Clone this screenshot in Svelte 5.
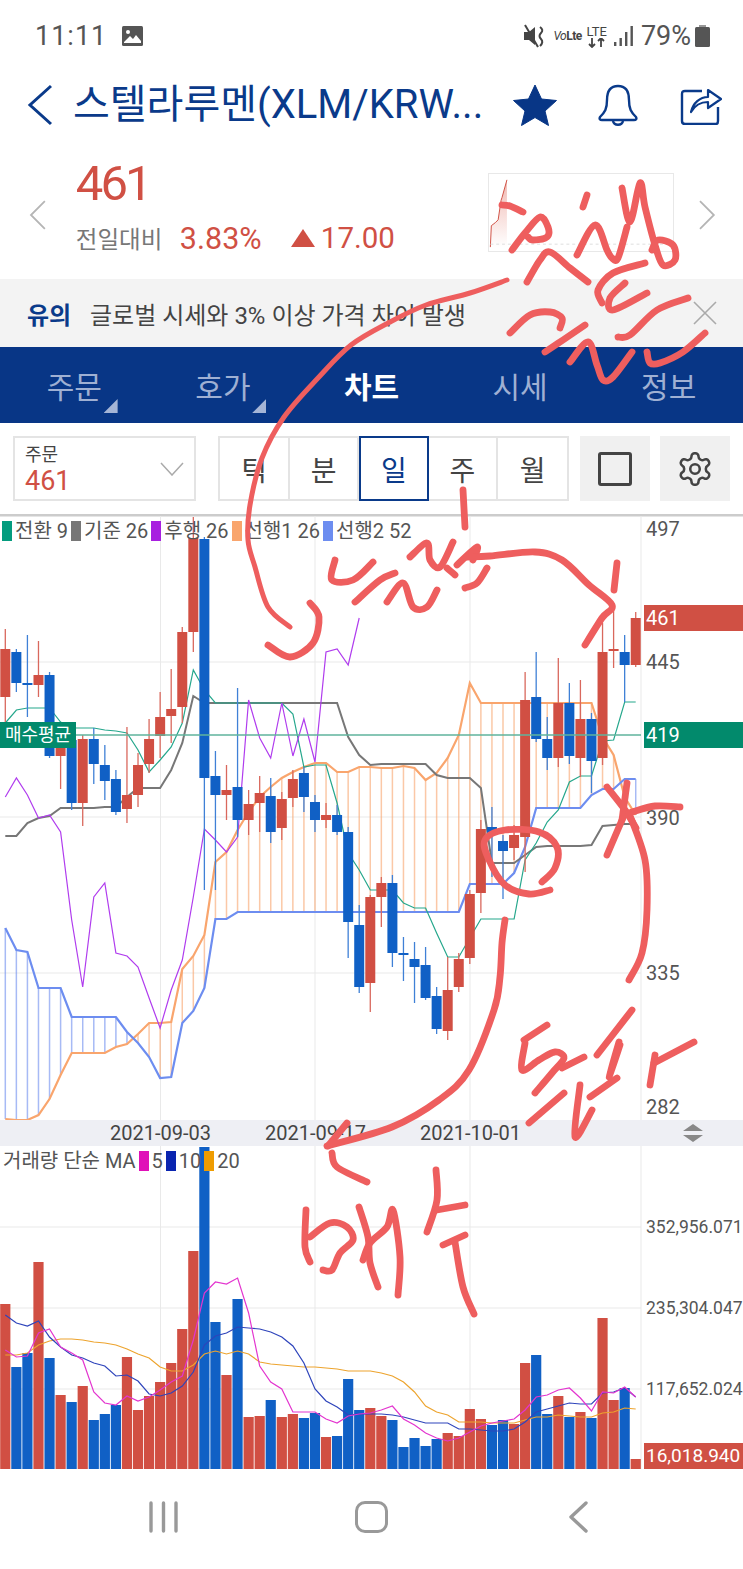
<script lang="ts">
  // candle x positions share one grid across both panes
  const STEP = 11.06;
  const xAt = (i: number) => 5.3 + STEP * i;

  // [up?, high, bodyTop, bodyBottom, low] in page y
  const candles: [number, number, number, number, number][] = [
    [1,629,649,697,723],[0,649,652,683,692],[0,635,683,685,717],[1,641,675,685,697],[0,672,675,756,758],
    [1,735,740,756,789],[0,738,740,803,810],[1,735,739,803,826],[0,728,739,764,784],[0,745,765,781,800],
    [0,770,779,812,815],[1,727,795,809,823],[1,753,765,795,807],[1,719,739,764,773],[1,692,717,736,758],
    [1,669,709,716,743],[1,627,632,707,723],[1,517,538,632,652],[0,537,539,778,890],[0,751,776,795,890],
    [1,765,790,795,820],[0,688,787,820,837],[1,790,804,820,835],[1,776,793,803,832],[0,778,796,832,843],
    [1,792,799,828,840],[1,770,779,798,807],[0,767,773,797,812],[0,795,802,820,832],[1,803,815,820,828],
    [0,805,815,832,835],[0,827,832,922,958],[0,905,925,987,993],[1,895,897,983,1012],[1,877,883,897,927],
    [0,875,883,953,967],[0,937,953,955,981],[0,942,959,967,1003],[0,947,965,998,1000],[0,987,996,1029,1034],
    [1,957,990,1031,1040],[1,953,959,987,992],[1,890,894,958,964],[1,820,829,893,913],[0,807,827,835,877],
    [0,835,841,851,899],[1,825,835,848,860],[1,672,700,837,872],[0,652,697,739,742],[0,717,739,758,770],
    [1,658,703,758,767],[0,683,703,756,764],[1,680,719,758,777],[0,713,719,761,793],[1,623,652,758,765],
    [1,603,649,651,668],[0,635,652,665,702],[1,612,618,665,667]
  ];

  const tenkan = [723,710,708,708,708,722,728,728,728,730,731,733,750,772,760,747,723,670,690,703,703,703,703,703,703,703,714,767,765,765,803,853,870,890,890,890,903,908,908,933,957,957,938,919,919,919,919,860,843,822,810,782,776,776,741,740,702,702];
  const kijun = [836,836,823,818,816,808,808,808,808,807,807,797,788,788,788,770,743,696,703,703,703,703,703,703,703,703,703,703,703,703,703,737,755,765,764,764,764,764,764,775,778,778,778,788,863,863,863,855,847,846,846,846,846,845,826,825,824,824];
  const chikou = [797,778,795,818,815,832,920,987,897,883,953,956,967,998,1028,990,960,897,829,840,852,837,700,738,758,703,756,719,762,652,649,665,618];
  const span1 = [1119,1120,1120,1115,1099,1075,1053,1053,1053,1053,1047,1044,1034,1023,1023,1022,969,956,935,862,852,830,812,797,787,778,772,767,763,763,772,772,767,767,768,768,766,768,780,773,758,735,683,703,703,703,703,703,703,703,703,703,703,703,737,755,797,815];
  const span2 = [928,950,952,988,988,988,1017,1017,1017,1017,1017,1032,1043,1057,1078,1077,1023,1011,988,919,919,912,912,912,912,912,912,912,912,912,912,912,912,912,912,912,912,912,912,912,912,912,884,884,884,884,873,847,808,808,808,808,808,795,789,789,779,779];

  const volumeTops = [1304,1367,1353,1262,1358,1395,1402,1386,1420,1414,1405,1357,1410,1396,1382,1363,1329,1251,1147,1322,1375,1299,1417,1416,1400,1417,1414,1418,1413,1437,1436,1379,1410,1408,1416,1420,1447,1438,1446,1439,1433,1436,1409,1419,1425,1420,1424,1363,1355,1414,1396,1417,1412,1418,1318,1400,1388,1459];
  const ma5 = [1350,1357,1356,1333,1329,1347,1353,1360,1392,1403,1405,1396,1401,1397,1390,1382,1376,1340,1293,1282,1284,1278,1313,1366,1382,1389,1412,1412,1412,1419,1423,1416,1414,1413,1410,1406,1419,1425,1433,1438,1441,1438,1432,1426,1423,1421,1419,1410,1397,1395,1390,1388,1398,1411,1392,1393,1387,1397];
  const ma10 = [1315,1323,1326,1321,1337,1347,1355,1358,1363,1366,1376,1375,1381,1394,1396,1393,1386,1372,1345,1336,1333,1327,1328,1329,1332,1337,1346,1363,1389,1401,1407,1415,1414,1414,1414,1415,1417,1420,1423,1423,1423,1429,1429,1430,1431,1431,1429,1422,1412,1409,1406,1403,1404,1404,1393,1392,1388,1397];
  const ma20 = [1355,1355,1353,1345,1341,1339,1339,1340,1342,1343,1345,1349,1354,1358,1367,1371,1371,1365,1354,1351,1354,1351,1354,1362,1364,1365,1366,1367,1367,1368,1369,1371,1371,1371,1373,1376,1382,1392,1406,1412,1415,1422,1422,1422,1423,1423,1423,1420,1417,1417,1415,1416,1417,1417,1413,1412,1408,1409];

  const line = (ys: number[]) => ys.map((y, i) => `${xAt(i).toFixed(1)},${y}`).join(' ');

  const priceGrid = [662, 817, 973];
  const volumeGrid = [1227, 1308, 1389];
  const dateGrid = [160.5, 315, 470];

  const priceAxis = [['497', 529], ['445', 662], ['390', 818], ['335', 973], ['282', 1107]] as const;
  const volumeAxis = [['352,956.071', 1227], ['235,304.047', 1308], ['117,652.024', 1389]] as const;

  const legend = [
    ['전환 9', '#049c7e'], ['기준 26', '#777'], ['후행 26', '#a81fe0'], ['선행1 26', '#f9a56d'], ['선행2 52', '#6d8df0']
  ];
  const tabs = [
    { label: '주문', more: true }, { label: '호가', more: true }, { label: '차트', active: true }, { label: '시세' }, { label: '정보' }
  ];
  const periods = ['틱', '분', '일', '주', '월'];

  // pen marks scribbled on top of the screenshot, page coordinates
  const ink: number[][] = [
    [502,205,510,206,523,212],
    [512,250,525,233,540,217,548,227,547,237,533,240,528,237],
    [527,282,540,260,550,252,570,268,588,282],
    [587,195,583,207],
    [577,255,595,225,607,250,612,258,618,258,627,227],
    [622,188,630,222,640,183,645,207,655,245,663,265,675,260,673,245,658,240,652,250],
    [645,263,613,273,598,290,602,303],
    [625,283,610,298,613,310,647,293],
    [688,298,657,310,630,335,618,337],
    [510,333,530,315,550,312,562,318,560,328],
    [585,325,563,340,545,352],
    [570,362,588,342,597,365,603,380,613,377,632,352],
    [647,352,650,363,660,363,683,352,705,333],
    [507,280,470,293,426,305,390,322,351,345,318,378,284,417,262,458,250,505,248,540,255,567,268,607,290,627],
    [310,603,319,617,313,643,290,657,268,645],
    [463,490,465,527],
    [335,560,332,580,353,580,373,562],
    [355,602,380,580,395,573],
    [387,602,403,583,413,607,427,607,437,590],
    [410,557,427,543,430,560,440,567,453,542],
    [447,568,455,575],
    [457,565,477,547,473,560],
    [465,588,477,583,487,568],
    [467,557,490,556,535,552,562,560,589,585,612,605,602,618,585,645],
    [617,563,614,590],
    [607,787,625,810,636,828],
    [627,783,622,820],
    [632,812,655,806,680,807],
    [607,855,625,813],
    [629,813,645,860,647,910,642,953,629,980],
    [550,890,529,894,505,885,489,860,485,840,505,830,539,832,557,847,555,868,542,882],
    [505,920,502,943,500,977,494,1010,469,1070,439,1100,392,1127,327,1146],
    [347,1123,328,1146],
    [332,1153,337,1167,367,1182],
    [547,1025,524,1040],
    [525,1043,522,1070,539,1060,555,1052,564,1058,552,1073,535,1093],
    [584,1057,562,1068],
    [564,1093,529,1123],
    [580,1085,575,1137,592,1110],
    [632,1010,597,1055],
    [619,1042,609,1077,620,1045],
    [617,1078,590,1097],
    [694,1042,654,1063],
    [655,1055,650,1085],
    [306,1210,305,1247,310,1262],
    [310,1237,330,1223,347,1227,353,1240,340,1253,332,1270,323,1270],
    [359,1207,368,1237,370,1263,378,1287],
    [363,1260,370,1243,387,1227,393,1210,400,1257,398,1295],
    [436,1170,437,1200,427,1232],
    [437,1210,465,1205],
    [443,1245,465,1235],
    [455,1242,463,1287,474,1314]
  ];

  function smooth(p: number[]) {
    const pts: [number, number][] = [];
    for (let i = 0; i < p.length; i += 2) pts.push([p[i], p[i + 1]]);
    let d = `M${pts[0][0]} ${pts[0][1]}`;
    for (let i = 0; i < pts.length - 1; i++) {
      const a = pts[Math.max(i - 1, 0)];
      const b = pts[i];
      const c = pts[i + 1];
      const e = pts[Math.min(i + 2, pts.length - 1)];
      const c1x = b[0] + (c[0] - a[0]) / 6;
      const c1y = b[1] + (c[1] - a[1]) / 6;
      const c2x = c[0] - (e[0] - b[0]) / 6;
      const c2y = c[1] - (e[1] - b[1]) / 6;
      d += ` C${c1x.toFixed(1)} ${c1y.toFixed(1)} ${c2x.toFixed(1)} ${c2y.toFixed(1)} ${c[0]} ${c[1]}`;
    }
    return d;
  }

  const gearPath = 'M12.22 2h-.44a2 2 0 0 0-2 2v.18a2 2 0 0 1-1 1.73l-.43.25a2 2 0 0 1-2 0l-.15-.08a2 2 0 0 0-2.73.73l-.22.38a2 2 0 0 0 .73 2.73l.15.1a2 2 0 0 1 1 1.72v.51a2 2 0 0 1-1 1.74l-.15.09a2 2 0 0 0-.73 2.73l.22.38a2 2 0 0 0 2.73.73l.15-.08a2 2 0 0 1 2 0l.43.25a2 2 0 0 1 1 1.73V20a2 2 0 0 0 2 2h.44a2 2 0 0 0 2-2v-.18a2 2 0 0 1 1-1.73l.43-.25a2 2 0 0 1 2 0l.15.08a2 2 0 0 0 2.73-.73l.22-.39a2 2 0 0 0-.73-2.73l-.15-.08a2 2 0 0 1-1-1.74v-.5a2 2 0 0 1 1-1.74l.15-.09a2 2 0 0 0 .73-2.73l-.22-.38a2 2 0 0 0-2.73-.73l-.15.08a2 2 0 0 1-2 0l-.43-.25a2 2 0 0 1-1-1.73V4a2 2 0 0 0-2-2z';
</script>

<div class="page">
  <div class="status">
    <span class="clock">11:11</span>
    <svg class="pic" viewBox="0 0 21 20" width="21" height="20">
      <rect width="21" height="20" rx="1.5" fill="#555" />
      <circle cx="6" cy="6" r="2" fill="#fff" />
      <path d="M2 16 L8 10 L11 13 L14 9 L19 15 V17 H2Z" fill="#fff" />
    </svg>
    <div class="status-right">
      <svg viewBox="0 0 22 26" width="22" height="26" class="mute">
        <path d="M1 9 H6 L12 4 V22 L6 17 H1Z" fill="#444" />
        <path d="M2 2 L15 24" stroke="#444" stroke-width="2" />
        <path d="M17 4 Q21 7 18 10 Q15 13 18 16 Q21 19 17 23" fill="none" stroke="#444" stroke-width="2" />
      </svg>
      <span class="volte"><i>Vo</i><b>Lte</b></span>
      <span class="lte">LTE<svg viewBox="0 0 20 10" width="20" height="10"><path d="M5 0 V9 M2 6 L5 9 L8 6 M14 9 V0 M11 3 L14 0 L17 3" fill="none" stroke="#444" stroke-width="1.8" /></svg></span>
      <svg viewBox="0 0 20 22" width="20" height="22" class="signal">
        <rect x="0" y="17" width="2.4" height="4" fill="#555" />
        <rect x="5.5" y="13" width="2.4" height="8" fill="#555" />
        <rect x="11" y="7" width="2.4" height="14" fill="#555" />
        <rect x="16.5" y="1" width="2.4" height="20" fill="#555" />
      </svg>
      <span class="batt-text">79%</span>
      <svg viewBox="0 0 15 22" width="15" height="22" class="batt">
        <rect x="4" y="0" width="7" height="3" fill="#999" />
        <rect x="0" y="2" width="15" height="20" rx="1.5" fill="#555" />
      </svg>
    </div>
  </div>

  <header class="head">
    <svg class="back" viewBox="0 0 26 42" width="26" height="42"><path d="M24 2 L3 21 L24 40" fill="none" stroke="#0a3a8a" stroke-width="3" /></svg>
    <h1>스텔라루멘(XLM/KRW...</h1>
    <svg class="star" viewBox="0 0 44 42" width="44" height="42"><path d="M22 1 L28.5 15 L43.5 16.5 L32 27 L35.5 41.5 L22 33.5 L8.5 41.5 L12 27 L.5 16.5 L15.5 15Z" fill="#083686" stroke="#083686" stroke-linejoin="round" stroke-width="1" /></svg>
    <svg class="bell" viewBox="0 0 40 42" width="40" height="42">
      <path d="M20 2 C11 2 9 9 9 16 C9 25 7 28 2 33 C1 35 2 36 4 36 H36 C38 36 39 35 38 33 C33 28 31 25 31 16 C31 9 29 2 20 2Z" fill="none" stroke="#0a3a8a" stroke-width="2.4" />
      <path d="M15 37 C16 42 24 42 25 37" fill="none" stroke="#0a3a8a" stroke-width="2.4" />
    </svg>
    <svg class="share" viewBox="0 0 42 40" width="42" height="40">
      <path d="M22 6 H5 Q2 6 2 9 V36 Q2 39 5 39 H36 Q38 39 38 36 V22" fill="none" stroke="#0a3a8a" stroke-width="2.4" />
      <path d="M11 27 C13 18 20 12 28 12 V5 L41 14 L28 23 V17 C21 17 15 20 11 27Z" fill="none" stroke="#0a3a8a" stroke-width="2.2" stroke-linejoin="round" />
    </svg>
  </header>

  <section class="quote">
    <svg class="nudge" viewBox="0 0 18 30" width="18" height="30"><path d="M16 1 L2 15 L16 29" fill="none" stroke="#b5b5b5" stroke-width="1.8" /></svg>
    <div class="quote-main">
      <div class="price">461</div>
      <div class="change">
        <span class="label">전일대비</span>
        <span class="pct">3.83%</span>
        <svg viewBox="0 0 24 18" width="24" height="18"><path d="M12 0 L24 18 H0Z" fill="#d05044" /></svg>
        <span class="diff">17.00</span>
      </div>
    </div>
    <div class="spark">
      <svg viewBox="0 0 186 79" width="184" height="77">
        <defs>
          <linearGradient id="sparkfill" x1="0" y1="0" x2="0" y2="1">
            <stop offset="0" stop-color="#f0b9b2" />
            <stop offset="1" stop-color="#fff" />
          </linearGradient>
        </defs>
        <path d="M0 75 L1 53 L5 50 L8 47 L11 27 L12 24 L17 6 V75Z" fill="url(#sparkfill)" />
        <path d="M0 75 L1 53 L5 50 L8 47 L11 27 L12 24 L17 6" fill="none" stroke="#d05044" stroke-width="1" />
        <path d="M0 72 H186" stroke="#ddd" stroke-dasharray="3 3" />
      </svg>
    </div>
    <svg class="nudge" viewBox="0 0 18 30" width="18" height="30"><path d="M2 1 L16 15 L2 29" fill="none" stroke="#b5b5b5" stroke-width="1.8" /></svg>
  </section>

  <div class="notice">
    <b>유의</b>
    <span>글로벌 시세와 3% 이상 가격 차이 발생</span>
    <svg viewBox="0 0 24 24" width="24" height="24"><path d="M1 1 L23 23 M23 1 L1 23" stroke="#aaa" stroke-width="1.6" /></svg>
  </div>

  <nav class="tabs">
    {#each tabs as t}
      <div class="tab" class:active={t.active}>
        {t.label}
        {#if t.more}<i class="corner"></i>{/if}
      </div>
    {/each}
  </nav>

  <div class="tools">
    <div class="picker">
      <div class="picker-text"><span>주문</span><strong>461</strong></div>
      <svg viewBox="0 0 24 14" width="24" height="14"><path d="M1 1 L12 13 L23 1" fill="none" stroke="#aaa" stroke-width="1.5" /></svg>
    </div>
    <div class="periods">
      {#each periods as p}
        <div class="period" class:on={p === '일'}>{p}</div>
      {/each}
    </div>
    <div class="tool"><i class="square"></i></div>
    <div class="tool">
      <svg viewBox="0 0 24 24" width="38" height="38" fill="none" stroke="#444" stroke-width="1.6"><path d={gearPath} /><circle cx="12" cy="12" r="3" /></svg>
    </div>
  </div>

  <section class="pane price-pane">
    <svg viewBox="0 514 743 606" width="743" height="606">
      <rect x="0" y="514" width="743" height="2.5" fill="#ccc" />
      {#each dateGrid as x}<line x1={x} x2={x} y1="516" y2="1120" class="grid" />{/each}
      {#each priceGrid as y}<line x1="0" x2="641" y1={y} y2={y} class="grid" />{/each}
      <line x1="641" x2="641" y1="516" y2="1120" class="grid" />

      {#each span1 as y, i}
        {@const up = y < span2[i]}
        <line x1={xAt(i)} x2={xAt(i)} y1={y} y2={span2[i]} stroke={up ? '#f9a56d' : '#6d8df0'} stroke-width="1.5" opacity="0.6" />
      {/each}
      <polyline points={line(span1)} fill="none" stroke="#f9a56d" stroke-width="2.2" />
      <polyline points={line(span2)} fill="none" stroke="#6d8df0" stroke-width="2.2" />
      <polyline points={line(kijun)} fill="none" stroke="#777" stroke-width="2" />
      <polyline points={line(tenkan)} fill="none" stroke="#25a78c" stroke-width="1.2" />
      <polyline points={line(chikou)} fill="none" stroke="#b03cee" stroke-width="1.2" />

      {#each candles as [up, hi, top, bottom, lo], i}
        <line x1={xAt(i)} x2={xAt(i)} y1={hi} y2={lo} stroke={up ? '#d9685d' : '#3f80d6'} stroke-width="1.3" />
        <rect x={xAt(i) - 5} y={top} width="10" height={Math.max(bottom - top, 2)} fill={up ? '#d14f43' : '#1060c5'} />
      {/each}

      <line x1="0" x2="641" y1="735" y2="735" stroke="#5fb39c" stroke-width="1.5" />
      {#each priceAxis as [t, y]}<text x="646" y={y + 7} class="axis">{t}</text>{/each}
    </svg>

    <div class="legend">
      {#each legend as [name, color]}
        <i style="background: {color}"></i><span>{name}</span>
      {/each}
    </div>
    <div class="buy-avg">매수평균</div>
    <div class="tag red">461</div>
    <div class="tag green">419</div>
  </section>

  <div class="dates">
    <span>2021-09-03</span>
    <span>2021-09-17</span>
    <span>2021-10-01</span>
    <svg viewBox="0 0 20 18" width="20" height="18"><path d="M10 0 L20 7 H0Z M0 11 H20 L10 18Z" fill="#888" /></svg>
  </div>

  <section class="pane volume-pane">
    <svg viewBox="0 1146 743 323" width="743" height="323">
      {#each dateGrid as x}<line x1={x} x2={x} y1="1146" y2="1469" class="grid" />{/each}
      {#each volumeGrid as y}<line x1="0" x2="641" y1={y} y2={y} class="grid" />{/each}
      <line x1="641" x2="641" y1="1146" y2="1469" class="grid" />

      {#each volumeTops as top, i}
        <rect x={xAt(i) - 5.1} y={top} width="10.2" height={1469.5 - top} fill={candles[i][0] ? '#d14f43' : '#1060c5'} />
      {/each}
      <polyline points={line(ma20)} fill="none" stroke="#eda42e" stroke-width="1.2" />
      <polyline points={line(ma10)} fill="none" stroke="#2e44bb" stroke-width="1.2" />
      <polyline points={line(ma5)} fill="none" stroke="#e335cf" stroke-width="1.2" />

      {#each volumeAxis as [t, y]}<text x="646" y={y + 6} class="axis small">{t}</text>{/each}
    </svg>

    <div class="legend vol">
      <span>거래량 단순 MA</span>
      <i style="background: #e010b8"></i><span>5</span>
      <i style="background: #0a25b0"></i><span>10</span>
      <i style="background: #ef9c00"></i><span>20</span>
    </div>
    <div class="tag red bottom">16,018.940</div>
  </section>

  <footer class="softkeys">
    <svg viewBox="0 0 30 32" width="30" height="32"><path d="M2 2 V30 M14.5 2 V30 M27 2 V30" stroke="#999" stroke-width="3.4" stroke-linecap="round" /></svg>
    <i class="home"></i>
    <svg viewBox="0 0 20 32" width="20" height="32"><path d="M18 2 L3 16 L18 30" fill="none" stroke="#999" stroke-width="3.4" stroke-linecap="round" stroke-linejoin="round" /></svg>
  </footer>

  <svg class="ink" viewBox="0 0 743 1569" width="743" height="1569">
    {#each ink as stroke}
      <path d={smooth(stroke)} fill="none" stroke="#ee5e5e" stroke-width={stroke.length > 24 ? 5 : 6.8} stroke-linecap="round" stroke-linejoin="round" />
    {/each}
  </svg>
</div>

<style>
  :global(body) {
    margin: 0;
    background: #fff;
  }
  .page {
    position: relative;
    width: 743px;
    height: 1569px;
    overflow: hidden;
    background: #fff;
    font-family: Roboto, "Noto Sans CJK KR", sans-serif;
    color: #444;
  }

  .status {
    height: 60px;
    display: flex;
    align-items: center;
    padding: 12px 33px 0 35px;
    box-sizing: border-box;
  }
  .clock {
    font-size: 27px;
    color: #555;
    letter-spacing: 1px;
  }
  .pic {
    margin-left: 15px;
  }
  .status-right {
    margin-left: auto;
    display: flex;
    align-items: center;
  }
  .volte {
    font-size: 12px;
    width: 30px;
    margin-left: 8px;
    color: #444;
    letter-spacing: -0.5px;
    white-space: nowrap;
  }
  .lte {
    display: flex;
    flex-direction: column;
    align-items: center;
    font-size: 13px;
    line-height: 13px;
    margin-left: 3px;
    color: #444;
  }
  .signal {
    margin-left: 7px;
  }
  .batt-text {
    font-size: 27px;
    color: #555;
    margin-left: 7px;
  }
  .batt {
    margin-left: 4px;
  }

  .head {
    height: 90px;
    display: flex;
    align-items: center;
    padding-left: 27px;
    box-sizing: border-box;
  }
  h1 {
    margin: 0 0 0 20px;
    width: 440px;
    font-size: 40px;
    line-height: 48px;
    font-weight: 400;
    color: #0a3a8a;
    white-space: nowrap;
  }
  .star { flex: none; }
  .bell { margin-left: 41px; flex: none; }
  .share { margin-left: 42px; flex: none; }

  .quote {
    height: 129px;
    display: flex;
    align-items: center;
    padding: 0 27px 0 29px;
    box-sizing: border-box;
    position: relative;
  }
  .quote-main {
    margin-left: 29px;
    margin-bottom: 14px;
    width: 416px;
  }
  .price {
    font-size: 49px;
    line-height: 48px;
    color: #d05044;
    letter-spacing: -3px;
  }
  .change {
    display: flex;
    align-items: center;
    margin-top: 13px;
  }
  .label {
    font-size: 23.5px;
    color: #777;
    width: 104px;
  }
  .pct {
    font-size: 30.5px;
    color: #d05044;
    width: 111px;
  }
  .diff {
    font-size: 29.5px;
    color: #d05044;
    margin-left: 6px;
  }
  .spark {
    width: 186px;
    height: 79px;
    box-sizing: border-box;
    border: 1px solid #e8e8e8;
    margin-right: 24px;
    margin-bottom: 5px;
  }
  .spark svg {
    display: block;
  }

  .notice {
    height: 68px;
    background: #f3f3f3;
    display: flex;
    align-items: center;
    padding: 0 26px 0 27px;
    box-sizing: border-box;
    font-size: 24px;
  }
  .notice b {
    color: #0a3a8a;
    font-weight: 700;
    width: 63px;
  }
  .notice span {
    flex: 1;
    color: #444;
  }

  .tabs {
    height: 76px;
    background: #083686;
    display: flex;
  }
  .tab {
    flex: 1;
    position: relative;
    display: flex;
    align-items: center;
    justify-content: center;
    font-size: 30px;
    color: #9fb0d3;
  }
  .tab.active {
    color: #fff;
    font-weight: 700;
  }
  .corner {
    position: absolute;
    right: 31px;
    bottom: 10px;
    width: 14px;
    height: 14px;
    background: #a5b5d6;
    clip-path: polygon(100% 0, 100% 100%, 0 100%);
  }

  .tools {
    height: 91px;
    display: flex;
    align-items: center;
    padding: 0 13px;
    box-sizing: border-box;
  }
  .picker {
    width: 184px;
    height: 65px;
    box-sizing: border-box;
    border: 2px solid #e4e4e4;
    display: flex;
    align-items: center;
    justify-content: space-between;
    padding: 0 10px;
  }
  .picker-text {
    display: flex;
    flex-direction: column;
  }
  .picker-text span {
    font-size: 18px;
    line-height: 24px;
    color: #444;
  }
  .picker-text strong {
    font-size: 27px;
    line-height: 28px;
    font-weight: 400;
    color: #d05044;
  }
  .periods {
    display: flex;
    margin-left: 22px;
    border: 2px solid #e4e4e4;
    height: 65px;
    box-sizing: border-box;
  }
  .period {
    width: 69.4px;
    box-sizing: border-box;
    display: flex;
    align-items: center;
    justify-content: center;
    font-size: 28px;
    color: #444;
    border-right: 2px solid #e4e4e4;
  }
  .period:last-child {
    border-right: 0;
  }
  .period.on {
    margin: -2px 0;
    border: 2px solid #0a3a8a;
    color: #0a3a8a;
  }
  .tool {
    width: 70px;
    height: 65px;
    margin-left: 11px;
    background: #f0f0f0;
    display: flex;
    align-items: center;
    justify-content: center;
  }
  .tool + .tool {
    margin-left: 10px;
  }
  .square {
    width: 34px;
    height: 34px;
    box-sizing: border-box;
    border: 3px solid #444;
    border-radius: 3px;
  }

  .pane {
    position: relative;
    background: #fff;
  }
  .pane svg {
    display: block;
  }
  .price-pane {
    height: 606px;
  }
  .grid {
    stroke: #e9e9e9;
    stroke-width: 1;
  }
  .axis {
    font-size: 20px;
    fill: #555;
  }
  .axis.small {
    font-size: 17.5px;
  }
  .legend {
    position: absolute;
    left: 2px;
    top: 7px;
    display: flex;
    align-items: center;
    font-size: 20px;
    line-height: 20px;
    color: #555;
  }
  .legend i {
    width: 10px;
    height: 20px;
    margin-right: 3px;
    flex: none;
  }
  .legend span {
    margin-right: 3px;
    white-space: nowrap;
  }
  .legend.vol {
    left: 3px;
    top: 5px;
  }
  .buy-avg {
    position: absolute;
    left: 0;
    top: 208px;
    width: 76px;
    height: 26px;
    background: #028a6c;
    color: #fff;
    font-size: 18px;
    line-height: 26px;
    text-align: center;
  }
  .tag {
    position: absolute;
    left: 644px;
    width: 99px;
    height: 26px;
    box-sizing: border-box;
    padding-left: 2px;
    color: #fff;
    font-size: 20px;
    line-height: 26px;
  }
  .tag.red {
    top: 91px;
    background: #d05044;
  }
  .tag.green {
    top: 208px;
    background: #028a6c;
  }
  .tag.bottom {
    top: auto;
    bottom: 0;
    font-size: 19px;
  }

  .dates {
    height: 26px;
    background: #eeeff4;
    position: relative;
    display: flex;
    align-items: center;
    font-size: 20px;
    color: #444;
  }
  .dates span {
    width: 155px;
    text-align: center;
  }
  .dates span:first-child {
    margin-left: 83px;
  }
  .dates svg {
    position: absolute;
    left: 683px;
    top: 4px;
  }
  .volume-pane {
    height: 323px;
  }

  .softkeys {
    height: 100px;
    display: grid;
    grid-template-columns: 222px 1fr 222px;
    align-items: center;
    justify-items: center;
    box-sizing: border-box;
  }
  .softkeys svg:first-child {
    justify-self: end;
    margin-right: 43px;
    margin-bottom: 4px;
  }
  .softkeys svg:last-of-type {
    justify-self: start;
    margin-left: 47px;
    margin-bottom: 4px;
  }
  .home {
    width: 33px;
    height: 32px;
    box-sizing: border-box;
    border: 3.5px solid #999;
    border-radius: 10px;
    margin-bottom: 4px;
  }

  .ink {
    position: absolute;
    left: 0;
    top: 0;
    pointer-events: none;
  }
</style>
